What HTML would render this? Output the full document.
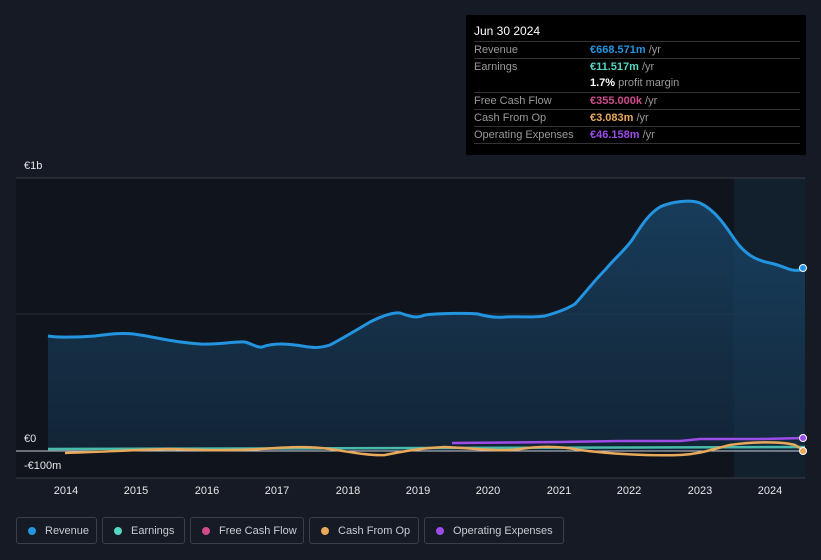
<!DOCTYPE html>
<html><head><meta charset="utf-8"><style>
body{margin:0;width:821px;height:560px;background:#151a24;font-family:"Liberation Sans",sans-serif;overflow:hidden;position:relative}
.tt{position:absolute;left:466px;top:15px;width:340px;height:140px;background:#000;color:#fff;font-size:11px}
.tt .h{position:absolute;left:8px;top:9px;font-size:12px}
.row{position:absolute;left:8px;width:326px;border-top:1px solid #333;height:16px;line-height:16px;color:#999}
.row span{position:absolute;left:116px}
.row b{font-weight:bold}
.leg{position:absolute;top:517px;height:27px;border:1px solid #3a3f48;border-radius:3px;color:#c8ccd2;font-size:11px;line-height:27px;box-sizing:border-box;padding-left:28px}
.leg i{position:absolute;left:11px;top:9px;width:8px;height:8px;border-radius:50%}
.yl{position:absolute;color:#e6e6e6;font-size:11px}
.xl{position:absolute;top:485px;color:#e6e6e6;font-size:11px;width:40px;margin-left:-20px;text-align:center}
</style></head><body>
<svg width="821" height="560" style="position:absolute;left:0;top:0">
<defs><linearGradient id="g" x1="0" y1="0" x2="0" y2="1"><stop offset="0" stop-color="#1a4a70" stop-opacity=".75"/><stop offset="1" stop-color="#143048" stop-opacity=".6"/></linearGradient></defs>
<rect x="16" y="178" width="789" height="300" fill="#10141c"/>
<rect x="734" y="178" width="71" height="300" fill="#12202e"/>
<line x1="16" y1="178" x2="805" y2="178" stroke="#3a3f48"/>
<line x1="16" y1="314" x2="805" y2="314" stroke="#252a33"/>
<line x1="16" y1="478" x2="805" y2="478" stroke="#3a3f48"/>
<path d="M48,336 C60,338 80,337 95,336 C110,334 125,332 140,335 C155,337 170,342 200,344 C220,345 235,341 245,342 C252,344 258,348 262,347 C270,344 280,343 295,345 C305,346 315,350 330,345 C345,337 360,328 370,322 C380,317 392,312 400,313 C410,316 415,319 425,315 C440,313 470,313 478,314 C485,316 495,318 505,317 C520,316 530,318 545,316 C555,313 565,310 575,304 C585,293 595,280 605,270 C615,258 625,250 632,240 C640,228 648,214 660,207 C670,202 690,199 700,203 C715,210 725,225 735,240 C745,254 755,260 770,263 C785,266 790,272 800,270 L805,269 L805,451 L48,451 Z" fill="url(#g)"/>
<path d="M48,336 C60,338 80,337 95,336 C110,334 125,332 140,335 C155,337 170,342 200,344 C220,345 235,341 245,342 C252,344 258,348 262,347 C270,344 280,343 295,345 C305,346 315,350 330,345 C345,337 360,328 370,322 C380,317 392,312 400,313 C410,316 415,319 425,315 C440,313 470,313 478,314 C485,316 495,318 505,317 C520,316 530,318 545,316 C555,313 565,310 575,304 C585,293 595,280 605,270 C615,258 625,250 632,240 C640,228 648,214 660,207 C670,202 690,199 700,203 C715,210 725,225 735,240 C745,254 755,260 770,263 C785,266 790,272 800,270 L805,269" fill="none" stroke="#2394df" stroke-width="3"/>
<line x1="16" y1="451" x2="805" y2="451" stroke="#c8ccd2" stroke-width="1"/>
<path d="M48,449 L805,447" stroke="#55d6c0" stroke-width="2.5" fill="none" opacity=".85"/>
<path d="M452,443 L560,442 L620,441 L680,441 L700,439 L760,439 L805,438" stroke="#9d4ce8" stroke-width="2.5" fill="none"/>
<path d="M65,453 C100,452 130,450 170,449 C200,450 230,451 260,449 C290,447 310,446 330,449 C350,452 370,456 385,455 C400,452 420,448 445,447 C470,448 500,452 520,449 C540,446 560,446 580,450 C610,454 650,456 680,455 C700,454 710,450 730,445 C750,442 780,441 795,445 L805,451" stroke="#e9a95a" stroke-width="2.5" fill="none"/>
<circle cx="803" cy="268" r="3.5" fill="#2394df" stroke="#fff" stroke-width="1"/>
<circle cx="803" cy="438" r="3.5" fill="#9d4ce8" stroke="#fff" stroke-width="1"/>
<circle cx="803" cy="451" r="3.5" fill="#e9a95a" stroke="#fff" stroke-width="1"/>
</svg>
<div class="yl" style="left:24px;top:160px">€1b</div>
<div class="yl" style="left:24px;top:433px">€0</div>
<div class="yl" style="left:24px;top:460px">-€100m</div>
<div class="xl" style="left:66px">2014</div><div class="xl" style="left:136px">2015</div><div class="xl" style="left:207px">2016</div><div class="xl" style="left:277px">2017</div><div class="xl" style="left:348px">2018</div><div class="xl" style="left:418px">2019</div><div class="xl" style="left:488px">2020</div><div class="xl" style="left:559px">2021</div><div class="xl" style="left:629px">2022</div><div class="xl" style="left:700px">2023</div><div class="xl" style="left:770px">2024</div>
<div class="tt">
<div class="h">Jun 30 2024</div>
<div class="row" style="top:26px">Revenue<span><b style="color:#2394df">€668.571m</b> /yr</span></div>
<div class="row" style="top:43px">Earnings<span><b style="color:#55d6c0">€11.517m</b> /yr</span></div>
<div class="row" style="top:60px;border:none">&nbsp;<span><b style="color:#fff">1.7%</b> profit margin</span></div>
<div class="row" style="top:77px">Free Cash Flow<span><b style="color:#d04b8c">€355.000k</b> /yr</span></div>
<div class="row" style="top:94px">Cash From Op<span><b style="color:#e9a95a">€3.083m</b> /yr</span></div>
<div class="row" style="top:111px">Operating Expenses<span><b style="color:#9d4ce8">€46.158m</b> /yr</span></div>
<div class="row" style="top:128px;height:0"></div>
</div>
<div class="leg" style="left:16px;width:81px"><i style="background:#2394df"></i>Revenue</div>
<div class="leg" style="left:102px;width:83px"><i style="background:#55d6c0"></i>Earnings</div>
<div class="leg" style="left:190px;width:114px"><i style="background:#d04b8c"></i>Free Cash Flow</div>
<div class="leg" style="left:309px;width:110px"><i style="background:#e9a95a"></i>Cash From Op</div>
<div class="leg" style="left:424px;width:140px"><i style="background:#9d4ce8"></i>Operating Expenses</div>
</body></html>
